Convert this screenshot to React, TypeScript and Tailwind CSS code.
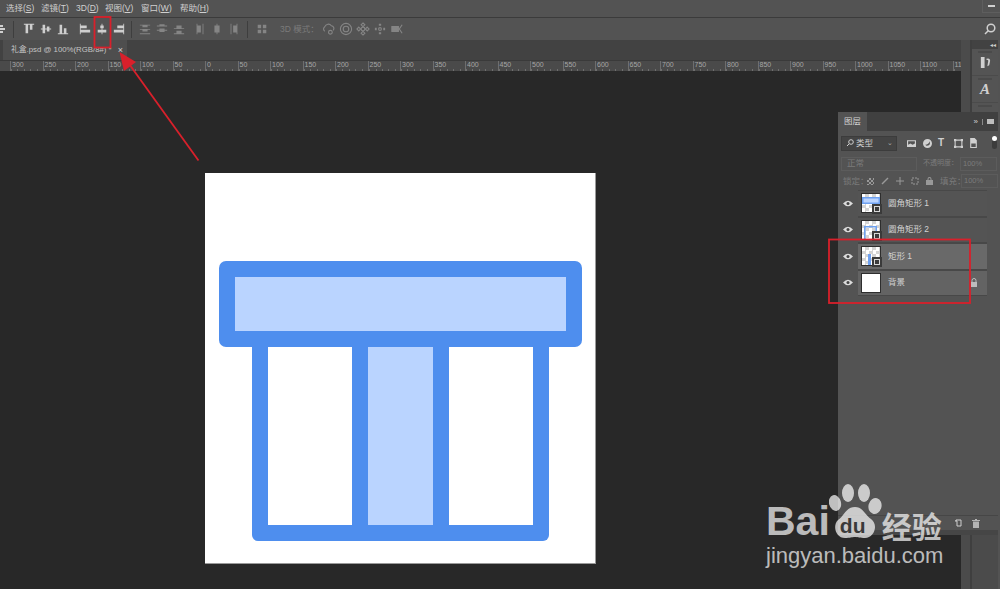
import type { ReactNode } from "react";

const CJK = "font-['Liberation_Sans','Noto_Sans_CJK_SC',sans-serif]";

const menus = [
  { label: "选择", key: "S", w: "w-[35px]" },
  { label: "滤镜", key: "T", w: "w-[35px]" },
  { label: "3D", key: "D", w: "w-[29px]" },
  { label: "视图", key: "V", w: "w-[36px]" },
  { label: "窗口", key: "W", w: "w-[39px]" },
  { label: "帮助", key: "H", w: "w-[36px]" },
];

// ruler labels, every 50 units = 32.5px on screen
const rulerLabels = ["300", "250", "200", "150", "100", "50", "0", "50", "100", "150", "200", "250", "300", "350", "400", "450", "500", "550", "600", "650", "700", "750", "800", "850", "900", "950", "1000", "1050", "1100", "11"];

function Align({ d, dim }: { d: string; dim?: boolean }) {
  return (
    <div className="w-[17px] flex justify-center shrink-0">
      <svg width="12" height="12" viewBox="0 0 14 14" fill={dim ? "#858585" : "#cfcfcf"}>
        <path d={d} />
      </svg>
    </div>
  );
}

const alignA = [
  "M1 1h12v1H1zM3 2h3v10H3zM8 2h3v6H8z",
  "M1 6.5h12v1H1zM3 2h3v10H3zM8 4h3v6H8z",
  "M1 12h12v1H1zM3 2h3v10H3zM8 6h3v6H8z",
];
const alignB = [
  "M1 1h1v12H1zM2 3h7v3H2zM2 8h11v3H2z",
  "M6.5 1h1v12h-1zM5 3h4v3H5zM2 8h10v3H2z",
  "M12 1h1v12h-1zM5 3h7v3H5zM1 8h11v3H1z",
];
const distA = [
  "M1 2h12v1H1zM4 3h6v2H4zM1 7h12v1H1zM4 8h6v2H4zM1 12h12v1H1z",
  "M1 3h12v1H1zM4 1.500h6v2H4zM1 8h12v1H1zM4 6.500h6v4H4z",
  "M1 12h12v1H1zM4 9h6v3H4zM1 6h12v1H1zM4 3h6v3H4z",
];
const distB = [
  "M3 1h1v12H3zM4 3h4v8H4zM10 1h1v12h-1z",
  "M6.500 1h1v12h-1zM4 3h6v8H4z",
  "M3 1h1v12H3zM10 1h1v12h-1zM6 3h4v8H6z",
];

function Sep({ className }: { className: string }) {
  return <div className={`w-px h-[17px] bg-[#3e3e3e] shrink-0 ${className}`} />;
}

function Icon3D({ children }: { children: ReactNode }) {
  return (
    <div className="w-[17px] flex justify-center shrink-0">
      <svg width="14" height="14" viewBox="0 0 15 15" fill="none" stroke="#858585" strokeWidth="1.200">
        {children}
      </svg>
    </div>
  );
}

function MenuBar() {
  return (
    <div className={`h-[18px] bg-[#535353] border-b border-[#3b3b3b] flex items-center pl-[6px] shrink-0 relative ${CJK}`}>
      {menus.map((m) => (
        <div key={m.key} className={`${m.w} text-[8.500px] text-[#d0d0d0] whitespace-nowrap`}>
          {m.label}(<span className="underline">{m.key}</span>)
        </div>
      ))}
      <div className="absolute right-0 top-0 w-[18px] h-[13px] border-l border-b border-[#5e5e5e] flex items-center justify-center">
        <div className="w-[7px] h-[1.500px] bg-[#d0d0d0]" />
      </div>
    </div>
  );
}

function OptionsBar() {
  return (
    <div className={`h-[22px] bg-[#535353] flex items-center shrink-0 ${CJK}`}>
      <svg width="5" height="10" viewBox="0 0 5 10" fill="#cfcfcf" className="shrink-0">
        <path d="M0 1h3v2H0zM0 4h5v2H0zM0 7h3v2H0z" />
      </svg>
      <Sep className="ml-[8px]" />
      <div className="flex ml-[6px]">
        {alignA.map((d) => <Align key={d} d={d} />)}
      </div>
      <div className="flex ml-[5px]">
        {alignB.map((d) => <Align key={d} d={d} />)}
      </div>
      <Sep className="ml-[4px]" />
      <div className="flex ml-[4px]">
        {distA.map((d) => <Align key={d} d={d} dim />)}
      </div>
      <div className="flex ml-[4px]">
        {distB.map((d) => <Align key={d} d={d} dim />)}
      </div>
      <Sep className="ml-[5px]" />
      <div className="ml-[5px]">
        <Align d="M2 2h4v4H2zM8 2h4v4H8zM2 8h4v4H2zM8 8h4v4H8z" dim />
      </div>
      <div className="ml-[10px] w-[40px] text-[8.500px] text-[#7b7b7b] whitespace-nowrap">3D 模式：</div>
      <div className="flex ml-[0px]">
        <Icon3D>
          <path d="M3 10a3 3 0 0 1 0-5 4 4 0 0 1 7-1 3 3 0 0 1 2 5" />
          <circle cx="9" cy="11" r="2" />
        </Icon3D>
        <Icon3D>
          <circle cx="7.500" cy="7.500" r="6" />
          <circle cx="7.500" cy="7.500" r="3" />
        </Icon3D>
        <Icon3D>
          <path d="M7.500 1l2 2-2 2-2-2zM7.500 10l2 2-2 2-2-2zM3 5.500l2 2-2 2-2-2zM12 5.500l2 2-2 2-2-2z" />
          <circle cx="7.500" cy="7.500" r="2" />
        </Icon3D>
        <Icon3D>
          <path d="M7.500 2v2M7.500 11v2M2 7.500h2M11 7.500h2" strokeWidth="2.500" />
          <circle cx="7.500" cy="7.500" r="1.500" />
        </Icon3D>
        <Icon3D>
          <path d="M2 5h7v5H2z" fill="#858585" />
          <path d="M13 3l-3 4.500 3 4.500" />
        </Icon3D>
      </div>
      <svg width="12" height="12" viewBox="0 0 12 12" fill="none" stroke="#d0d0d0" strokeWidth="1.500" className="ml-auto mr-[4px]">
        <circle cx="7" cy="5" r="3.800" />
        <path d="M4.200 7.800L1 11" />
      </svg>
    </div>
  );
}

function Tabs() {
  return (
    <div className={`h-[20px] bg-[#424242] flex pl-[3px] shrink-0 ${CJK}`}>
      <div className="w-[124px] bg-[#4e4e4e] flex items-center pl-[8px] text-[7.800px] text-[#c4c4c4] whitespace-nowrap">
        礼盒.psd @ 100%(RGB/8#) *
        <span className="ml-[6px] text-[9px] leading-none text-[#d0d0d0]">×</span>
      </div>
    </div>
  );
}

function Ruler() {
  return (
    <div className="h-[11px] bg-[#4a4a4a] border-t border-[#3a3a3a] flex pl-[10px] shrink-0 overflow-hidden font-['Liberation_Sans',sans-serif]">
      {rulerLabels.map((l, i) => (
        <div
          key={i}
          className="w-[32.500px] shrink-0 h-full border-l border-[#6e6e6e] pl-[1px] text-[7px] leading-[8px] text-[#a6a6a6] bg-[repeating-linear-gradient(90deg,#6e6e6e_0,#6e6e6e_1px,transparent_1px,transparent_6.500px)] bg-[length:100%_2px] bg-bottom bg-no-repeat"
        >
          {l}
        </div>
      ))}
    </div>
  );
}

function GiftArtwork() {
  return (
    <div className="w-[391px] h-[391px] bg-white border-r border-b border-[#9a9a9a] shrink-0">
      <svg width="390" height="390" viewBox="0 0 390 390">
        <path d="M47 170h297v192a6 6 0 0 1-6 6H53a6 6 0 0 1-6-6z" fill="#4e8eee" />
        <rect x="63" y="170" width="84" height="182" fill="#fff" />
        <rect x="163" y="170" width="65" height="182" fill="#bad4ff" />
        <rect x="244" y="170" width="84" height="182" fill="#fff" />
        <rect x="14" y="88" width="363" height="86" rx="7" fill="#4e8eee" />
        <rect x="30" y="104" width="331" height="54" fill="#bad4ff" />
      </svg>
    </div>
  );
}

function DockButton({ children }: { children?: ReactNode }) {
  return (
    <div className="h-[26px] bg-[#545454] mb-[1px] flex items-center justify-center relative">
      <div className="absolute top-[2px] left-[6px] right-[6px] h-[2px] bg-[#4a4a4a]" />
      {children}
    </div>
  );
}

function Dock() {
  return (
    <div className="w-[39px] shrink-0 bg-[#535353] flex">
      <div className="w-[11px] shrink-0 border-r-2 border-[#3f3f3f] bg-[#4b4b4b]" />
      <div className="flex-1 flex flex-col mr-[2px] bg-[#4b4b4b]">
        <div className="h-[9px] bg-[#424242] flex items-center justify-end pr-[2px] text-[6px] leading-none text-[#cfcfcf]">◂◂</div>
        <DockButton>
          <svg width="13" height="13" viewBox="0 0 14 14" fill="#d0d0d0">
            <path d="M2 1h4v12H2zM8 3q4-1 4 2l-1 5-2 1 1-6q0-1-2-1z" />
          </svg>
        </DockButton>
        <DockButton>
          <span className="font-['Liberation_Serif',serif] italic font-bold text-[15px] text-[#d0d0d0]">A</span>
        </DockButton>
        <DockButton />
      </div>
    </div>
  );
}

function Check() {
  return <div className="w-[20px] h-[20px] bg-[conic-gradient(#d4d4d4_25%,#fff_0_50%,#d4d4d4_0_75%,#fff_0)] bg-[length:7px_7px] relative border border-[#2e2e2e] shrink-0" />;
}

function Badge() {
  return (
    <div className="absolute right-[-1px] bottom-[-1px] w-[10px] h-[10px] bg-[#3a3a3a] flex items-center justify-center">
      <div className="w-[6px] h-[6px] border border-[#d8d8d8]" />
    </div>
  );
}

function Eye() {
  return (
    <div className="w-[20px] flex justify-center shrink-0">
      <svg width="10" height="7" viewBox="0 0 10 7">
        <path d="M0 3.500Q5-2 10 3.500 5 9 0 3.500z" fill="#dcdcdc" />
        <circle cx="5" cy="3.500" r="1.500" fill="#444" />
      </svg>
    </div>
  );
}

function Layer({ name, bg, thumb, lock }: { name: string; bg: string; thumb: ReactNode; lock?: boolean }) {
  return (
    <div className="h-[26.500px] flex items-center">
      <Eye />
      <div className={`w-[129px] h-full flex items-center pl-[3px] border-b border-t border-[#484848] ${bg}`}>
        {thumb}
        <div className="ml-[7px] text-[8.500px] text-[#d2d2d2] whitespace-nowrap">{name}</div>
        {lock && (
          <svg width="8" height="9" viewBox="0 0 8 9" fill="#bdbdbd" className="ml-auto mr-[9px]">
            <path d="M1 4h6v5H1z" />
            <path d="M2 4V2.500a2 2 0 0 1 4 0V4" fill="none" stroke="#bdbdbd" />
          </svg>
        )}
      </div>
    </div>
  );
}

function LayerThumb({ children }: { children: ReactNode }) {
  return (
    <div className="relative">
      <Check />
      <svg width="20" height="20" viewBox="0 0 20 20" className="absolute inset-0">
        {children}
      </svg>
      <Badge />
    </div>
  );
}

function LayersPanel() {
  return (
    <div className={`absolute left-[838px] top-[112px] w-[160px] h-[423px] bg-[#535353] flex flex-col ${CJK}`}>
      {/* tab header */}
      <div className="h-[19px] bg-[#404040] flex items-center shrink-0">
        <div className="w-[29px] h-full bg-[#535353] text-[8.500px] text-[#d2d2d2] flex items-center justify-center">图层</div>
        <div className="ml-auto mr-[4px] flex items-center gap-[4px]">
          <span className="text-[8px] leading-none text-[#cfcfcf]">»</span>
          <div className="w-px h-[6px] bg-[#8a8a8a]" />
          <div className="w-[7px] h-[5px] bg-[#bdbdbd]" />
        </div>
      </div>
      {/* filter */}
      <div className="h-[24px] flex items-center pl-[3px] shrink-0">
        <div className="w-[56px] h-[15px] bg-[#444] border border-[#3c3c3c] flex items-center pl-[4px] text-[8.500px] text-[#cfcfcf]">
          <svg width="8" height="8" viewBox="0 0 8 8" fill="none" stroke="#cfcfcf">
            <circle cx="5" cy="3" r="2.300" />
            <path d="M3 5L1 7" />
          </svg>
          <span className="ml-[2px]">类型</span>
          <span className="ml-auto mr-[3px] text-[7px] text-[#aaa]">⌄</span>
        </div>
        <div className="flex ml-[10px] gap-[6.500px] items-center">
          <svg width="9" height="9" viewBox="0 0 8 8" fill="#d0d0d0"><path d="M0 1h8v6H0zM1 2v3l2-1 2 1 2-1V2z" /></svg>
          <svg width="9" height="9" viewBox="0 0 8 8" fill="#d0d0d0"><path d="M4 0a4 4 0 1 0 0 8 4 4 0 0 0 0-8zM2 5q3 0 4-3 1 4-3 4z" /></svg>
          <div className="w-[9px] text-[10px] leading-none font-bold text-[#d0d0d0]">T</div>
          <svg width="9" height="9" viewBox="0 0 8 8" fill="none" stroke="#d0d0d0"><path d="M1 1h6v6H1z" /><path d="M0 0h2v2H0zM6 0h2v2H6zM0 6h2v2H0zM6 6h2v2H6z" fill="#d0d0d0" stroke="none" /></svg>
          <svg width="9" height="10" viewBox="0 0 8 9" fill="#d0d0d0"><path d="M1 0h4l2 2v7H1zM2 5v3h4V5z" /></svg>
        </div>
        <div className="ml-auto mr-[1px] w-[5px] h-[12px] rounded-full bg-[#3c3c3c] relative">
          <div className="absolute -top-[1px] left-0 w-[5px] h-[5px] rounded-full bg-white" />
        </div>
      </div>
      {/* blend mode */}
      <div className="h-[17px] flex items-center pl-[3px] shrink-0 text-[8.500px] text-[#7b7b7b]">
        <div className="w-[76px] h-[14px] border border-[#5c5c5c] flex items-center pl-[5px]">正常</div>
        <div className="ml-[6px] w-[37px] text-[7px] whitespace-nowrap">不透明度：</div>
        <div className="w-[37px] h-[14px] border border-[#5c5c5c] flex items-center pl-[2px] text-[7.500px]">100%</div>
      </div>
      {/* lock */}
      <div className="h-[18px] flex items-center pl-[5px] shrink-0 text-[8.500px] text-[#7b7b7b]">
        <div className="w-[24px] whitespace-nowrap">锁定：</div>
        <div className="flex gap-[7px] items-center">
          <div className="w-[7px] h-[7px] bg-[conic-gradient(#999_25%,#555_0_50%,#999_0_75%,#555_0)] bg-[length:4px_4px]" />
          <svg width="8" height="8" viewBox="0 0 8 8" stroke="#999" strokeWidth="1.500"><path d="M1 7l6-6" /></svg>
          <svg width="8" height="8" viewBox="0 0 8 8" stroke="#999"><path d="M4 0v8M0 4h8" /></svg>
          <svg width="8" height="8" viewBox="0 0 8 8" fill="none" stroke="#999"><path d="M1 1h6v6H1z" strokeDasharray="2 1" /></svg>
          <svg width="7" height="8" viewBox="0 0 7 8" fill="#999"><path d="M0 3h7v5H0zM1.500 3V2a2 2 0 0 1 4 0v1h-1V2a1 1 0 0 0-2 0v1z" /></svg>
        </div>
        <div className="ml-[7px] w-[21px] whitespace-nowrap">填充：</div>
        <div className="w-[37px] h-[14px] border border-[#5c5c5c] flex items-center pl-[2px] text-[7.500px]">100%</div>
      </div>
      {/* layer list */}
      <div className="flex-1 min-h-0">
        <Layer
          name="圆角矩形 1"
          bg="bg-[#545454]"
          thumb={
            <LayerThumb>
              <rect x="1" y="4" width="18" height="7" fill="#6ea1f0" />
              <rect x="2.500" y="5.500" width="15" height="4" fill="#bad4ff" />
            </LayerThumb>
          }
        />
        <Layer
          name="圆角矩形 2"
          bg="bg-[#545454]"
          thumb={
            <LayerThumb>
              <path d="M3 6h13v13h-1.500V7.500H4.500V19H3z" fill="#6ea1f0" />
            </LayerThumb>
          }
        />
        <Layer
          name="矩形 1"
          bg="bg-[#696969]"
          thumb={
            <LayerThumb>
              <path d="M7 8h3v11H7z" fill="#6ea1f0" />
            </LayerThumb>
          }
        />
        <Layer
          name="背景"
          bg="bg-[#636363]"
          lock
          thumb={<div className="w-[20px] h-[20px] bg-white border border-[#2e2e2e] shrink-0" />}
        />
      </div>
      {/* bottom bar */}
      <div className="h-[15px] border-t border-[#464646] flex items-center justify-end pr-[18px] gap-[10px] shrink-0">
        <svg width="8" height="8" viewBox="0 0 8 8" fill="none" stroke="#d0d0d0"><path d="M2 2V1h5v6H3V2H1" /></svg>
        <svg width="8" height="9" viewBox="0 0 8 9" fill="#b5b5b5"><path d="M0 1h8v1H0zM1 2.500h6V9H1zM3 0h2v1H3z" /></svg>
      </div>
      <div className="h-[5px] bg-[#464646] shrink-0" />
    </div>
  );
}

function Annotations() {
  const red = "#d9202b";
  return (
    <svg width="1000" height="589" viewBox="0 0 1000 589" fill="none" className="absolute left-0 top-0 pointer-events-none">
      <rect x="94.500" y="17" width="16" height="30.500" stroke={red} strokeWidth="1.800" />
      <rect x="829" y="239.500" width="141" height="63.500" stroke={red} strokeWidth="1.800" />
      <path d="M198.500 160.500L127 61" stroke={red} strokeWidth="1.800" />
      <path d="M119.500 52L136 62 124 71z" fill={red} />
    </svg>
  );
}

function Watermark() {
  return (
    <div className="absolute left-[766px] top-[483px] w-[190px] h-[86px] text-white/70 pointer-events-none">
      <div className="flex items-start h-[58px]">
        <div className="mt-[18px] text-[41px] leading-[40px] font-bold font-['Liberation_Sans',sans-serif]">Bai</div>
        <div className="relative w-[53px] h-[56px] shrink-0 -ml-[1px]">
          <svg width="53" height="56" viewBox="0 0 53 56" className="absolute inset-0" fill="#fff" fillOpacity="0.7">
            <ellipse cx="6" cy="20" rx="6" ry="8" transform="rotate(-15 6 20)" />
            <ellipse cx="19" cy="10" rx="6" ry="9" />
            <ellipse cx="35" cy="10" rx="6" ry="9" />
            <ellipse cx="46" cy="23" rx="6.500" ry="8" transform="rotate(15 46 23)" />
            <path d="M26 24c8 0 10 8 16 12 8 6 3 19-6 19-5 0-7-1-10-1s-5 1-10 1C7 55 3 43 9 37c6-4 8-13 17-13z" />
          </svg>
          <div className="absolute left-[11px] top-[32px] text-[21px] leading-[21px] font-bold text-[#3a3a3a] font-['Liberation_Sans',sans-serif]">du</div>
        </div>
        <div className="mt-[27px] text-[30px] leading-[30px] font-bold whitespace-nowrap font-['Noto_Sans_CJK_SC',sans-serif]">经验</div>
      </div>
      <div className="mt-[2px] text-[22px] leading-[26px] whitespace-nowrap font-['Liberation_Sans',sans-serif]">jingyan.baidu.com</div>
    </div>
  );
}

export default function App() {
  return (
    <div className="relative w-[1000px] h-[589px] overflow-hidden flex flex-col bg-[#282828]">
      <MenuBar />
      <OptionsBar />
      <div className="flex flex-1 min-h-0">
        <div className="flex-1 min-w-0 flex flex-col">
          <Tabs />
          <Ruler />
          <div className="flex-1 min-h-0 pl-[205px] pt-[102px]">
            <GiftArtwork />
          </div>
        </div>
        <Dock />
      </div>
      <LayersPanel />
      <Annotations />
      <Watermark />
    </div>
  );
}
